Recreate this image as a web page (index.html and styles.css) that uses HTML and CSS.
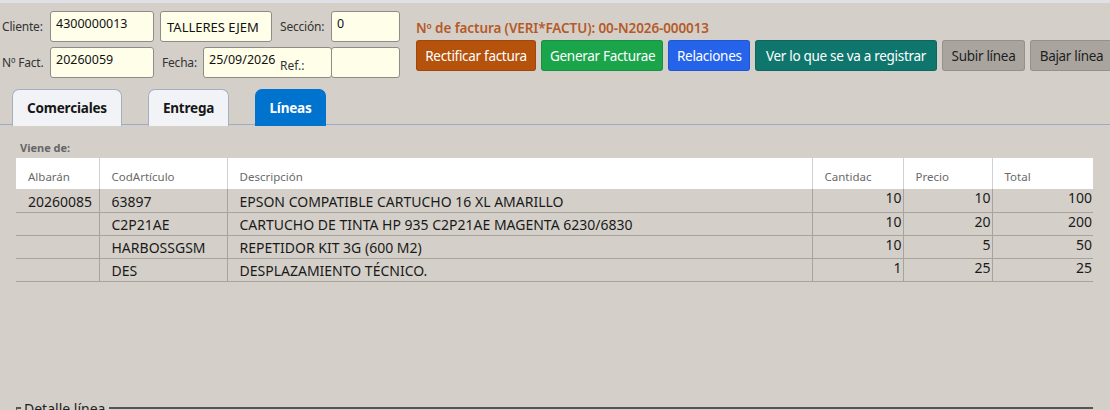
FILE: index.html
```html
<!DOCTYPE html>
<html lang="es">
<head>
<meta charset="utf-8">
<title>Factura</title>
<link rel="stylesheet" href="styles.css">
</head>
<body>
<div class="page">
  <header class="head">
    <div class="form">
      <div class="row">
        <label class="lbl lbl-first">Cliente:</label>
        <div class="fld fld-code top">4300000013</div>
        <div class="fld fld-name mid">TALLERES EJEM</div>
        <label class="lbl lbl-sec">Sección:</label>
        <div class="fld fld-small top">0</div>
      </div>
      <div class="row">
        <label class="lbl lbl-first">Nº Fact.</label>
        <div class="fld fld-code top">20260059</div>
        <label class="lbl lbl-fecha">Fecha:</label>
        <div class="fld fld-date">
          <span class="date-val">25/09/2026</span>
          <span class="ref-lbl">Ref.:</span>
        </div>
        <div class="fld fld-small fld-ref top"></div>
      </div>
    </div>
    <div class="actions">
      <div class="inv-no">Nº de factura (VERI*FACTU): 00-N2026-000013</div>
      <div class="btns">
        <button class="btn btn-orange">Rectificar factura</button>
        <button class="btn btn-green">Generar Facturae</button>
        <button class="btn btn-blue">Relaciones</button>
        <button class="btn btn-teal">Ver lo que se va a registrar</button>
        <button class="btn btn-gray">Subir línea</button>
        <button class="btn btn-gray">Bajar línea</button>
      </div>
    </div>
  </header>

  <nav class="tabs">
    <div class="tab tab-com">Comerciales</div>
    <div class="tab tab-ent">Entrega</div>
    <div class="tab tab-lin active">Líneas</div>
  </nav>

  <section class="lines">
    <div class="from">Viene de:</div>
    <table class="grid">
      <colgroup>
        <col class="c-alb"><col class="c-cod"><col class="c-desc"><col class="c-num"><col class="c-num2"><col class="c-tot">
      </colgroup>
      <thead>
        <tr><th>Albarán</th><th>CodArtículo</th><th>Descripción</th><th>Cantidac</th><th>Precio</th><th>Total</th></tr>
      </thead>
      <tbody>
        <tr><td>20260085</td><td>63897</td><td>EPSON COMPATIBLE CARTUCHO 16 XL AMARILLO</td><td class="n">10</td><td class="n">10</td><td class="n">100</td></tr>
        <tr><td></td><td>C2P21AE</td><td>CARTUCHO DE TINTA HP 935 C2P21AE MAGENTA 6230/6830</td><td class="n">10</td><td class="n">20</td><td class="n">200</td></tr>
        <tr><td></td><td>HARBOSSGSM</td><td>REPETIDOR KIT 3G (600 M2)</td><td class="n">10</td><td class="n">5</td><td class="n">50</td></tr>
        <tr><td></td><td>DES</td><td>DESPLAZAMIENTO TÉCNICO.</td><td class="n">1</td><td class="n">25</td><td class="n">25</td></tr>
      </tbody>
    </table>

    <fieldset class="detail">
      <legend>Detalle línea</legend>
    </fieldset>
  </section>
</div>
</body>
</html>
```

FILE: styles.css
```css
* { box-sizing: border-box; }

html, body {
  margin: 0;
  height: 100%;
  overflow: hidden;
}

body {
  background: #d4d0c9;
  font-family: "Noto Sans", "Open Sans", sans-serif;
  color: #222;
}

.page {
  border-top: 3px solid #dfe1e6;
}

/* ---------- header: form + actions ---------- */
.head {
  display: flex;
  padding-top: 8px;
}

.form {
  display: flex;
  flex-direction: column;
  gap: 5px;
  padding-left: 2px;
  width: 416px;
  flex: none;
}

.row {
  display: flex;
  align-items: center;
  height: 31px;
}

.lbl {
  font-size: 12px;
  color: #333;
  white-space: nowrap;
  letter-spacing: -0.2px;
  flex: none;
}
.lbl-first { width: 48px; }
.lbl-sec { width: 59px; padding-left: 8px; }
.lbl-fecha { width: 49px; padding-left: 8px; }

.fld {
  height: 31px;
  background: #ffffe9;
  border: 1px solid #8f8c88;
  border-radius: 3px;
  font-size: 12.5px;
  color: #111;
  padding: 0 5px;
  white-space: nowrap;
  overflow: hidden;
  flex: none;
}
.fld.top { padding-top: 3px; }
.fld.mid { display: flex; align-items: center; padding-left: 6px; font-size: 13px; }

.fld-code { width: 104px; }
.fld-name { width: 112px; margin-left: 6px; }
.fld-small { width: 69px; }
.fld-date {
  width: 129px;
  position: relative;
  padding-top: 3px;
}
.ref-lbl {
  position: absolute;
  left: 76px;
  top: 9px;
  font-size: 12px;
  color: #333;
}
.fld-ref { margin-left: -1px; }

.actions {
  display: flex;
  flex-direction: column;
  padding-top: 8px;
}

.inv-no {
  font-size: 13.5px;
  font-weight: 600;
  color: #b45a2a;
  height: 21px;
  line-height: 18px;
  letter-spacing: -0.1px;
}

.btns {
  display: flex;
  gap: 5px;
}

.btn {
  height: 31px;
  border: 1px solid rgba(0,0,0,0.12);
  border-radius: 3px;
  font-family: "Noto Sans", "Open Sans", sans-serif;
  font-size: 13.5px;
  color: #fff;
  padding: 0 8px;
  white-space: nowrap;
  letter-spacing: -0.3px;
  flex: none;
}
.btn-orange { background: #b5520c; width: 120px; }
.btn-green  { background: #1aa54b; width: 122px; }
.btn-blue   { background: #2563eb; width: 82px; }
.btn-teal   { background: #0f766e; width: 182px; }
.btn-gray   { background: #a9a59e; color: #1e1e1e; width: 83px; }

/* ---------- tabs ---------- */
.tabs {
  display: flex;
  gap: 26px;
  padding-left: 12px;
  margin-top: 11px;
  border-bottom: 1px solid #9eabc0;
  height: 36px;
}

.tab {
  height: 37px;
  border: 1px solid #a4b0c2;
  border-bottom: none;
  border-radius: 7px 7px 0 0;
  background: #f1f3f7;
  font-size: 13.5px;
  font-weight: 700;
  color: #161616;
  display: flex;
  align-items: center;
  justify-content: center;
  letter-spacing: -0.2px;
}
.tab-com { width: 110px; }
.tab-ent { width: 81px; }
.tab-lin { width: 71px; }
.tab.active {
  background: #0073cf;
  border-color: #0073cf;
  color: #fff;
}

/* ---------- lines grid ---------- */
.lines {
  padding: 0 16px 0 16px;
}

.from {
  font-size: 11px;
  font-weight: 700;
  color: #666;
  padding: 15px 0 0 4px;
  height: 33px;
}

.grid {
  width: 1077px;
  border-collapse: collapse;
  table-layout: fixed;
  font-size: 14px;
}
.c-alb { width: 83px; }
.c-cod { width: 128px; }
.c-desc { width: 585px; }
.c-num { width: 91px; }
.c-num2 { width: 89px; }
.c-tot { width: 101px; }

.grid thead tr {
  background: #fff;
  height: 31px;
}
.grid th {
  text-align: left;
  font-weight: 400;
  font-size: 11.5px;
  color: #6a6a6a;
  padding: 6px 0 0 12px;
  border-left: 1px solid #d2d2d2;
  white-space: nowrap;
  overflow: hidden;
}
.grid th:first-child { border-left: none; }

.grid td {
  height: 23px;
  padding: 0 0 0 12px;
  border-top: 1px solid #a7a39d;
  border-left: 1px solid #a7a39d;
  color: #1a1a1a;
  white-space: nowrap;
  overflow: hidden;
  vertical-align: bottom;
  line-height: 21px;
}
.grid td:first-child { border-left: none; }
.grid tbody tr:first-child td { border-top: none; }
.grid tbody tr:last-child td { border-bottom: 1px solid #a7a39d; }
.grid td.n {
  text-align: right;
  padding: 0 1px 0 0;
  vertical-align: top;
  line-height: 17px;
  overflow: visible;
}

/* ---------- detail fieldset ---------- */
.detail {
  margin: 117px 0 0 0;
  width: 1077px;
  border: none;
  border-top: 2px solid #555;
  border-left: 1px solid #555;
  padding: 0;
  height: 20px;
}
.detail legend {
  font-size: 14px;
  color: #222;
  padding: 0 4px 0 3px;
  margin-left: 4px;
}
```
